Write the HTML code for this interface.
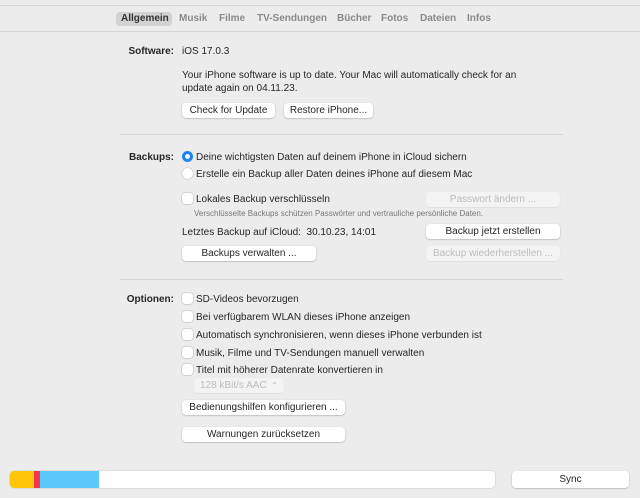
<!DOCTYPE html>
<html><head><meta charset="utf-8"><style>
*{margin:0;padding:0;box-sizing:border-box}
body{width:640px;height:498px;background:#ececec;font-family:"Liberation Sans",sans-serif;font-size:10px;color:#262626;position:relative;overflow:hidden}
.a{position:absolute;white-space:nowrap}
.line{position:absolute;height:1px;background:#d6d6d6}
.tab{position:absolute;top:13px;font-size:10px;font-weight:bold;color:#8a8a8a}
.lbl{position:absolute;font-weight:bold;text-align:right;width:80px}
.btn{position:absolute;background:#fff;border-radius:4px;box-shadow:0 0.5px 1.5px rgba(0,0,0,.3);text-align:center;font-size:10px;line-height:15px;height:15px;color:#262626}
.btn.dis{background:#f3f3f3;color:#bdbdbd;box-shadow:0 0.5px 1px rgba(0,0,0,.1)}
.cb{position:absolute;width:11px;height:11px;border-radius:3px;background:#fff;box-shadow:0 0 0 .5px #bbb,0 .5px 1px rgba(0,0,0,.15)}
.rad{position:absolute;width:11px;height:11px;border-radius:50%;background:#fff;box-shadow:0 0 0 .5px #bbb}
</style></head><body>
<div class="line" style="top:5px;left:0;width:640px"></div>
<div class="line" style="top:31px;left:0;width:640px"></div>
<div class="a" style="left:116px;top:12px;width:56px;height:14px;background:#d2d2d2;border-radius:4px"></div>
<div class="tab" style="left:121px;color:#333">Allgemein</div>
<div class="tab" style="left:179px">Musik</div>
<div class="tab" style="left:219px">Filme</div>
<div class="tab" style="left:257px">TV-Sendungen</div>
<div class="tab" style="left:337px">Bücher</div>
<div class="tab" style="left:381px">Fotos</div>
<div class="tab" style="left:420px">Dateien</div>
<div class="tab" style="left:467px">Infos</div>

<div class="lbl" style="left:94px;top:46px">Software:</div>
<div class="a" style="left:182px;top:46px">iOS 17.0.3</div>
<div class="a" style="left:182px;top:69px;line-height:13px">Your iPhone software is up to date. Your Mac will automatically check for an<br>update again on 04.11.23.</div>
<div class="btn" style="left:182px;top:103px;width:93px">Check for Update</div>
<div class="btn" style="left:284px;top:103px;width:89px">Restore iPhone...</div>
<div class="line" style="top:134px;left:120px;width:443px"></div>

<div class="lbl" style="left:94px;top:152px">Backups:</div>
<div class="rad" style="left:182px;top:151px;background:#fff;box-shadow:inset 0 0 0 3px #1a82f7"></div>
<div class="a" style="left:196px;top:152px">Deine wichtigsten Daten auf deinem iPhone in iCloud sichern</div>
<div class="rad" style="left:182px;top:168px"></div>
<div class="a" style="left:196px;top:169px">Erstelle ein Backup aller Daten deines iPhone auf diesem Mac</div>
<div class="cb" style="left:182px;top:193px"></div>
<div class="a" style="left:196px;top:194px">Lokales Backup verschlüsseln</div>
<div class="btn dis" style="left:426px;top:192px;width:134px">Passwort ändern ...</div>
<div class="a" style="left:194px;top:209px;font-size:8px;color:#777">Verschlüsselte Backups schützen Passwörter und vertrauliche persönliche Daten.</div>
<div class="a" style="left:182px;top:227px">Letztes Backup auf iCloud:&nbsp; 30.10.23, 14:01</div>
<div class="btn" style="left:426px;top:224px;width:134px">Backup jetzt erstellen</div>
<div class="btn" style="left:182px;top:246px;width:134px">Backups verwalten ...</div>
<div class="btn dis" style="left:426px;top:246px;width:134px">Backup wiederherstellen ...</div>
<div class="line" style="top:279px;left:120px;width:443px"></div>

<div class="lbl" style="left:94px;top:294px">Optionen:</div>
<div class="cb" style="left:182px;top:293px"></div><div class="a" style="left:196px;top:294px">SD-Videos bevorzugen</div>
<div class="cb" style="left:182px;top:311px"></div><div class="a" style="left:196px;top:312px">Bei verfügbarem WLAN dieses iPhone anzeigen</div>
<div class="cb" style="left:182px;top:329px"></div><div class="a" style="left:196px;top:330px">Automatisch synchronisieren, wenn dieses iPhone verbunden ist</div>
<div class="cb" style="left:182px;top:347px"></div><div class="a" style="left:196px;top:348px">Musik, Filme und TV-Sendungen manuell verwalten</div>
<div class="cb" style="left:182px;top:364px"></div><div class="a" style="left:196px;top:365px">Titel mit höherer Datenrate konvertieren in</div>
<div class="btn dis" style="left:194px;top:378px;width:90px;text-align:left;padding-left:6px">128 kBit/s AAC <span style="position:absolute;right:6px;font-size:8px">⌃</span></div>
<div class="btn" style="left:182px;top:400px;width:163px">Bedienungshilfen konfigurieren ...</div>
<div class="btn" style="left:182px;top:427px;width:163px">Warnungen zurücksetzen</div>

<div class="a" style="left:10px;top:471px;width:485px;height:17px;background:#fff;border-radius:4px;overflow:hidden;box-shadow:0 0 0 .5px #ccc">
<div class="a" style="left:0;top:0;width:24px;height:17px;background:#fdc60a"></div>
<div class="a" style="left:24px;top:0;width:6px;height:17px;background:#f2374a"></div>
<div class="a" style="left:30px;top:0;width:59px;height:17px;background:#5ac8fa"></div>
</div>
<div class="btn" style="left:512px;top:471px;width:117px;height:17px;line-height:17px">Sync</div>
</body></html>
